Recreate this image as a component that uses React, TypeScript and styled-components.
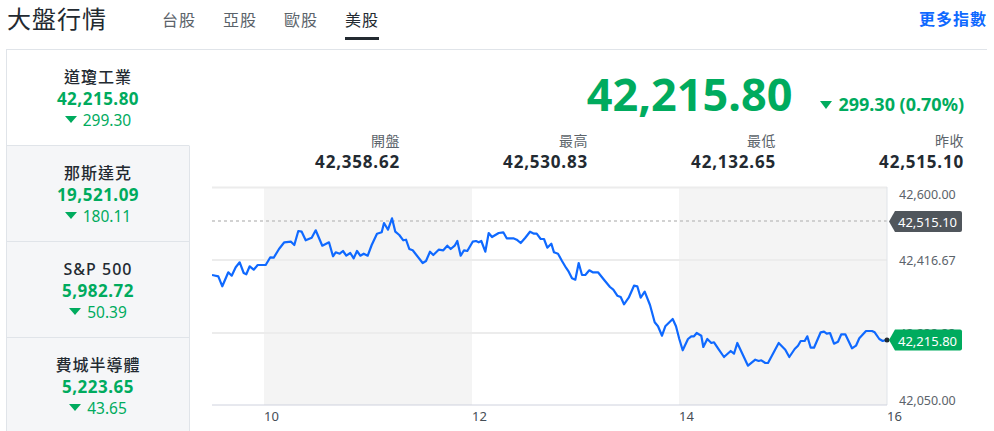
import React from 'react';
import styled, { createGlobalStyle } from 'styled-components';

const GREEN = '#00ab5e';
const DARK = '#232a31';
const GRAY = '#5b636a';
const LINE = '#e0e4e9';

const GlobalStyle = createGlobalStyle`
  body {
    margin: 0;
    background: #fff;
    font-family: "Noto Sans", "Noto Sans CJK TC", sans-serif;
    color: ${DARK};
  }
`;

const Page = styled.div`
  width: 981px;
  margin-left: 6px;
`;

const Header = styled.header`
  display: flex;
  align-items: flex-start;
  height: 50px;
  box-sizing: border-box;
  border-bottom: 1px solid ${LINE};
`;

const Title = styled.h1`
  margin: 0 0 0 1px;
  font-size: 24px;
  line-height: 38px;
  font-weight: 400;
  letter-spacing: 1px;
`;

const Tabs = styled.nav`
  display: flex;
  gap: 27px;
  margin-left: 55px;
`;

const Tab = styled.a<{ $active?: boolean }>`
  padding-top: 3px;
  font-size: 16px;
  line-height: 34px;
  letter-spacing: 1px;
  color: ${p => (p.$active ? DARK : GRAY)};
  border-bottom: 3px solid ${p => (p.$active ? DARK : 'transparent')};
  cursor: pointer;
`;

const MoreLink = styled.a`
  margin-left: auto;
  font-size: 16px;
  font-weight: 700;
  line-height: 38px;
  letter-spacing: 1px;
  color: #0f69ff;
  cursor: pointer;
`;

const Body = styled.div`
  display: flex;
`;

const Sidebar = styled.aside`
  width: 184px;
  flex-shrink: 0;
`;

const IndexItem = styled.div<{ $active?: boolean }>`
  height: 96px;
  box-sizing: border-box;
  display: flex;
  flex-direction: column;
  align-items: center;
  justify-content: center;
  background: ${p => (p.$active ? '#fff' : '#f5f6f8')};
  border-left: 1px solid ${LINE};
  border-right: 1px solid ${p => (p.$active ? '#fff' : LINE)};
  border-bottom: 1px solid ${LINE};
`;

const IndexName = styled.div`
  font-size: 16px;
  font-weight: 500;
  line-height: 22px;
  letter-spacing: 1px;
  color: ${DARK};
`;

const IndexValue = styled.div`
  font-size: 17px;
  font-weight: 700;
  line-height: 22px;
  letter-spacing: 0.5px;
  color: ${GREEN};
`;

const IndexChange = styled.div`
  display: flex;
  align-items: center;
  gap: 6px;
  font-size: 15.5px;
  line-height: 20px;
  color: ${GREEN};
`;

const DownArrow = styled.span<{ $w: number; $h: number }>`
  display: inline-block;
  width: 0;
  height: 0;
  border-left: ${p => p.$w / 2}px solid transparent;
  border-right: ${p => p.$w / 2}px solid transparent;
  border-top: ${p => p.$h}px solid ${GREEN};
`;

const Main = styled.main`
  flex: 1;
  padding: 20px 23px 0 22px;
`;

const Quote = styled.div`
  display: flex;
  justify-content: flex-end;
  align-items: baseline;
  height: 48px;
`;

const BigPrice = styled.span`
  font-size: 45px;
  font-weight: 700;
  line-height: 48px;
  color: ${GREEN};
`;

const PriceChange = styled.span`
  margin-left: 28px;
  font-size: 18px;
  font-weight: 700;
  color: ${GREEN};
  ${DownArrow} {
    vertical-align: middle;
    margin: -3px 6px 0 0;
  }
`;

const Stats = styled.div`
  display: grid;
  grid-template-columns: repeat(4, 1fr);
  margin-top: 13px;
  text-align: right;
`;

const StatLabel = styled.div`
  font-size: 14px;
  line-height: 20px;
  letter-spacing: 0.5px;
  color: ${GRAY};
`;

const StatValue = styled.div`
  font-size: 17px;
  font-weight: 700;
  line-height: 22px;
  letter-spacing: 0.8px;
  color: ${DARK};
`;

const ChartSvg = styled.svg`
  display: block;
  margin-top: 12px;
  font-family: "Noto Sans", sans-serif;
`;

const PRICE_LINE = `212,276 218.3,277.3 222.3,287.3 228.3,273.3 231.7,276.7 235.7,268.3 239.7,263.3
243.7,274 246.3,275.3 249.7,267.3 253.7,270.7 257.7,266 265.7,266 270.3,258.3 273.7,258.7 279,250
284.3,243.3 291,242.7 294.3,246 298.3,232 301.7,232.7 305.7,241.3 311.7,238.7 315.7,231.3 322.3,246.7
329,243.3 333,257.3 335.7,253.3 339.7,254.7 343,252 346.3,256.7 350.3,254 353.7,259.3 357,252
360.3,256.7 363.7,254.7 367.7,256.7 371.7,246 377,234.7 381.7,233.3 384,224 388,230.7 392,219.3
395.3,232.7 399.3,236 403.3,241.3 406,240.7 409.3,250 412.7,251.3 422.7,264 426,262 430,252.7
433.3,256 438.7,250.7 443.3,251.3 447.3,246.7 450.7,250 454.7,246.7 457.3,242 460.7,256.7 464,251.3
467.3,252 472.7,242.7 476,242 478.7,243.3 481.3,242 485.3,252.7 488.7,234 492,238 498.7,234
503.3,233.3 506.7,239.3 513.3,239.3 516.7,240.7 520.7,244 525.3,238.7 530,232.7 534,234.7 536.7,234.7
540.7,240 544,240 547.3,248.7 551.3,244.7 554,253.3 558,254.7 562,262 566,268.7 568.7,272.7 572,279.3
575.3,280.7 578.7,264 582,276 585.3,276 589.3,271.3 592.7,273.3 598,273.3 604,280.7 610,288
613.3,290.7 617.3,296.7 620.7,298 624,305.3 628.7,298.7 634,286.7 637.3,287.3 640.7,298.7 644.7,292.7
650,306 654.7,323.3 658,327.3 662,336.7 665.3,327.3 672.7,320 676,327.3 679.3,340 682.7,351.3 688,340
691.3,337.3 694,337.3 696.7,334 701.3,336.7 703.3,348 707.3,340 711.3,344 714,343.3 718.7,350.3
724,358 730.7,352 734,354.7 737.3,344 748,366.7 755.3,360.7 758.7,362 761.3,361.3 765.3,364 768,364
778.7,344 785.3,350.7 789.3,358 794.7,350 798,346.7 800.7,342 804.7,342 807.3,337.3 810.7,348.7
814,348.7 820.7,333.3 824,332.7 826.7,334.7 830,334 834,344.7 838,342.7 841.3,335.3 845.3,335.3
852,349.3 856,346.7 859.3,339.3 866,332 872,332 874.7,333.3 879.3,340 882.7,342 886.7,340.7`;

const indices = [
  { name: '道瓊工業', value: '42,215.80', change: '299.30', active: true },
  { name: '那斯達克', value: '19,521.09', change: '180.11' },
  { name: 'S&P 500', value: '5,982.72', change: '50.39' },
  { name: '費城半導體', value: '5,223.65', change: '43.65' },
];

const stats = [
  { label: '開盤', value: '42,358.62' },
  { label: '最高', value: '42,530.83' },
  { label: '最低', value: '42,132.65' },
  { label: '昨收', value: '42,515.10' },
];

const yLabels = [
  { y: 195, text: '42,600.00' },
  { y: 261, text: '42,416.67' },
  { y: 334, text: '42,233.33' },
  { y: 401, text: '42,050.00' },
];

const xLabels = [
  { x: 264, text: '10' },
  { x: 472, text: '12' },
  { x: 679, text: '14' },
  { x: 887, text: '16' },
];

const tagPath = (cy: number) =>
  `M889 ${cy} L895 ${cy - 10.5} H960 Q962 ${cy - 10.5} 962 ${cy - 8.5} V${cy + 8.5} Q962 ${cy + 10.5} 960 ${cy + 10.5} H895 Z`;

const Chart = () => (
  <ChartSvg width={752} height={245} viewBox="212 186 752 245">
    <rect x={264} y={188} width={208} height={218} fill="#f4f4f4" />
    <rect x={679} y={188} width={208} height={218} fill="#f4f4f4" />
    {[188.5, 261, 334].map(y => (
      <line key={y} x1={212} x2={887} y1={y} y2={y} stroke="#ececec" strokeWidth={2} />
    ))}
    <line x1={212} x2={887} y1={222} y2={222} stroke="#c4c4c4" strokeWidth={1.5} strokeDasharray="3 3" />
    <line x1={887} x2={887} y1={188} y2={406} stroke={LINE} />
    <line x1={212} x2={887} y1={406} y2={406} stroke="#cfd2de" />
    <polyline points={PRICE_LINE} fill="none" stroke="#0f69ff" strokeWidth={2.2} strokeLinejoin="round" />
    <circle cx={887} cy={341} r={2.5} fill={DARK} />
    {yLabels.map(l => (
      <text key={l.text} x={899} y={l.y} fontSize={12.5} fill={GRAY} dominantBaseline="central">
        {l.text}
      </text>
    ))}
    <path d={tagPath(222.5)} fill="#50565c" />
    <text x={898} y={223} fontSize={13} fill="#fff" dominantBaseline="central">42,515.10</text>
    <path d={tagPath(341)} fill={GREEN} />
    <text x={898} y={341.5} fontSize={13} fill="#fff" dominantBaseline="central">42,215.80</text>
    {xLabels.map(l => (
      <text key={l.text} x={l.x} y={417} fontSize={13} fill="#464e56" dominantBaseline="central">
        {l.text}
      </text>
    ))}
  </ChartSvg>
);

export default function App() {
  return (
    <Page>
      <GlobalStyle />
      <Header>
        <Title>大盤行情</Title>
        <Tabs>
          <Tab>台股</Tab>
          <Tab>亞股</Tab>
          <Tab>歐股</Tab>
          <Tab $active>美股</Tab>
        </Tabs>
        <MoreLink>更多指數</MoreLink>
      </Header>
      <Body>
        <Sidebar>
          {indices.map(i => (
            <IndexItem key={i.name} $active={i.active}>
              <IndexName>{i.name}</IndexName>
              <IndexValue>{i.value}</IndexValue>
              <IndexChange>
                <DownArrow $w={12} $h={7} />
                {i.change}
              </IndexChange>
            </IndexItem>
          ))}
        </Sidebar>
        <Main>
          <Quote>
            <BigPrice>42,215.80</BigPrice>
            <PriceChange>
              <DownArrow $w={12} $h={8} />
              299.30 (0.70%)
            </PriceChange>
          </Quote>
          <Stats>
            {stats.map(s => (
              <div key={s.label}>
                <StatLabel>{s.label}</StatLabel>
                <StatValue>{s.value}</StatValue>
              </div>
            ))}
          </Stats>
          <Chart />
        </Main>
      </Body>
    </Page>
  );
}
